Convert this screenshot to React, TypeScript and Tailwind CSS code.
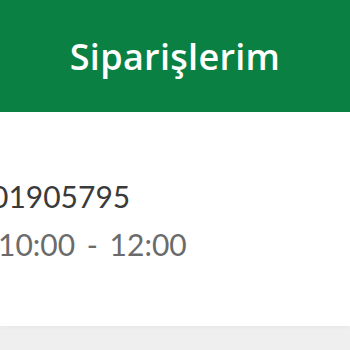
export default function App() {
  return (
    <div className="w-[350px] h-[350px] overflow-hidden bg-[#efefef] flex flex-col" style={{ fontFamily: 'Lato, "Noto Sans", sans-serif' }}>
      <header className="h-[112px] bg-[#0a8142] flex items-center justify-center shrink-0">
        <h1 className="text-white font-semibold text-[36px] leading-none pt-[1px] font-['Open_Sans',sans-serif] tracking-[0.3px]">Siparişlerim</h1>
      </header>
      <div className="bg-white h-[214px] shrink-0 shadow-[0_2px_4px_rgba(0,0,0,0.03)] pt-[60px]">
        <div className="ml-[-9px] whitespace-nowrap text-[30px] leading-[48px] text-[#3a3a3a]">01905795</div>
        <div className="ml-[-2px] whitespace-nowrap text-[30px] leading-[48px] text-[#6b6b6b] [word-spacing:4px]">10:00 - 12:00</div>
      </div>
    </div>
  );
}
